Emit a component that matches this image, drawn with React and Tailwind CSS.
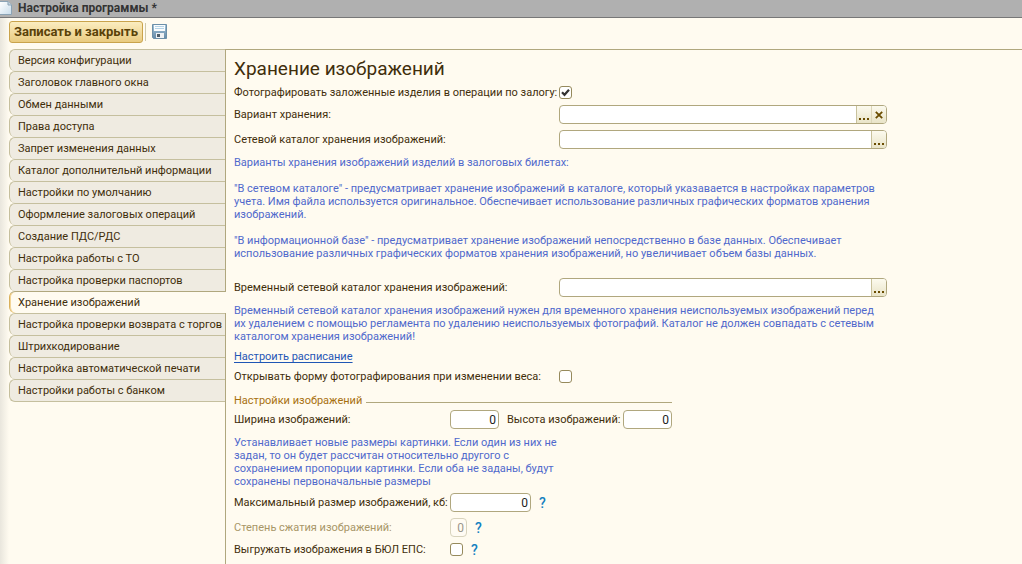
import React from "react";

const sections = [
  "Версия конфигурации",
  "Заголовок главного окна",
  "Обмен данными",
  "Права доступа",
  "Запрет изменения данных",
  "Каталог дополнительнй информации",
  "Настройки по умолчанию",
  "Оформление залоговых операций",
  "Создание ПДС/РДС",
  "Настройка работы с ТО",
  "Настройка проверки паспортов",
  "Хранение изображений",
  "Настройка проверки возврата с торгов",
  "Штрихкодирование",
  "Настройка автоматической печати",
  "Настройки работы с банком",
];
const active = "Хранение изображений";

const storageHint = `Варианты хранения изображений изделий в залоговых билетах:

"В сетевом каталоге" - предусматривает хранение изображений в каталоге, который указавается в настройках параметров
учета. Имя файла используется оригинальное. Обеспечивает использование различных графических форматов хранения
изображений.

"В информационной базе" - предусматривает хранение изображений непосредственно в базе данных. Обеспечивает
использование различных графических форматов хранения изображений, но увеличивает объем базы данных.`;

const tempHint = `Временный сетевой каталог хранения изображений нужен для временного хранения неиспользуемых изображений перед
их удалением с помощью регламента по удалению неиспользуемых фотографий. Каталог не должен совпадать с сетевым
каталогом хранения изображений!`;

const sizeHint = `Устанавливает новые размеры картинки. Если один из них не
задан, то он будет рассчитан относительно другого с
сохранением пропорции картинки. Если оба не заданы, будут
сохранены первоначальные размеры`;

function PageIcon() {
  return (
    <svg width="12" height="14" viewBox="0 0 12 14" className="shrink-0" aria-hidden="true">
      <defs>
        <linearGradient id="sheet" x1="0" y1="0" x2="1" y2="1">
          <stop offset="0" stopColor="#ffffff" />
          <stop offset="1" stopColor="#c8dcea" />
        </linearGradient>
      </defs>
      <path d="M0 0.5H8L11.5 4V13.5H0" fill="url(#sheet)" stroke="#8ba3b5" />
      <path d="M8 0.5V4H11.5" fill="#c3d5e2" stroke="#8ba3b5" />
    </svg>
  );
}

function DiskIcon() {
  return (
    <svg width="15" height="15" viewBox="0 0 15 15" aria-hidden="true">
      <defs>
        <linearGradient id="disk" x1="0" y1="0" x2="0" y2="1">
          <stop offset="0" stopColor="#a3c4da" />
          <stop offset="1" stopColor="#668aa6" />
        </linearGradient>
      </defs>
      <path d="M0.5 0.5H14.5V14.5H1.5L0.5 13.5Z" fill="url(#disk)" stroke="#6c8fa8" />
      <rect x="2" y="1" width="11" height="6" fill="#fafcfd" />
      <rect x="3" y="2" width="9" height="1" fill="#b4d3e6" />
      <rect x="3" y="4" width="9" height="1" fill="#b4d3e6" />
      <rect x="4" y="9" width="8" height="5" fill="#eef1f3" />
      <rect x="5" y="10" width="6" height="3" fill="#4f5d69" />
      <rect x="8" y="10" width="3" height="4" fill="#eef1f3" />
    </svg>
  );
}

function Dots() {
  return (
    <svg width="10" height="2" viewBox="0 0 10 2" aria-hidden="true">
      <path d="M0 0h2v2H0zM4 0h2v2H4zM8 0h2v2H8z" fill="#6a4c00" />
    </svg>
  );
}

function Cross() {
  return (
    <svg width="8" height="8" viewBox="0 0 8 8" aria-hidden="true">
      <path d="M0.8 0.8L7.2 7.2M7.2 0.8L0.8 7.2" stroke="#6a4c00" strokeWidth="1.8" />
    </svg>
  );
}

function PickerRow({ id, label, clearable, className }) {
  return (
    <div className={"flex items-center " + className}>
      <label htmlFor={id} className="w-[325px] shrink-0">{label}</label>
      <div className="flex h-[19px] w-[328px] overflow-hidden rounded border border-[#b0a77e] bg-white">
        <input id={id} type="text" className="min-w-0 flex-1 px-1 outline-none" />
        <button type="button" aria-label="Выбрать" className="flex w-[15px] items-end justify-center border-l border-[#c9c29c] bg-linear-to-b from-[#fcfaee] to-[#e9e4c8] pb-[3px]">
          <Dots />
        </button>
        {clearable && (
          <button type="button" aria-label="Очистить" className="flex w-[15px] items-center justify-center border-l border-[#dcd6b8] bg-linear-to-b from-[#fcfaee] to-[#e9e4c8]">
            <Cross />
          </button>
        )}
      </div>
    </div>
  );
}

function Check({ id, defaultChecked }) {
  return (
    <span className="relative flex">
      <input id={id} type="checkbox" defaultChecked={defaultChecked} className="peer size-[13px] appearance-none rounded-[3px] border border-[#968a5c] bg-white" />
      <svg width="13" height="13" viewBox="0 0 13 13" className="pointer-events-none absolute inset-0 hidden peer-checked:block" aria-hidden="true">
        <path d="M3 6.2L5.5 8.8L10 3.8" fill="none" stroke="#333333" strokeWidth="2.2" />
      </svg>
    </span>
  );
}

function NumberBox({ id, className, disabled }) {
  return (
    <input
      id={id}
      type="text"
      inputMode="numeric"
      defaultValue="0"
      disabled={disabled}
      className={"h-[19px] rounded border px-0.5 text-right text-xs " + (disabled ? "border-[#d8d3bd] bg-[#fffbf3] text-[#9a958a] " : "border-[#b0a77e] bg-white text-[#222222] ") + className}
    />
  );
}

function Help() {
  return <button type="button" aria-label="Справка" className="px-2 text-sm leading-4 font-medium text-[#1480c0]">?</button>;
}

function Hint({ children, className }) {
  return <p className={"leading-[13px] whitespace-pre-line text-[#5069cc] " + className}>{children}</p>;
}

export default function App() {
  return (
    <div className="flex min-h-screen flex-col overflow-x-hidden bg-[#fffbf0] font-['Roboto',sans-serif] text-[11px] leading-[19px] text-[#3f2e0b]">
      <header className="flex h-[18px] items-center gap-1.5 border-b border-[#777777] bg-[#b0b0b0] pb-0.5">
        <PageIcon />
        <h1 className="text-xs leading-4 font-bold text-[#333333]">Настройка программы *</h1>
      </header>
      <div className="flex flex-1 flex-col bg-[linear-gradient(to_right,#e9e6dd,#fffbf0_9px)]">
        <div className="flex h-[31px] items-center gap-0.5 pb-1 pl-[9px]">
          <button type="button" className="h-[22px] min-w-[133px] rounded-[3px] border border-[#c9a34c] bg-linear-to-b from-[#fbedc0] to-[#e9cb80] px-1 text-[13px] leading-5 font-bold text-[#5a4208]">
            Записать и закрыть
          </button>
          <span className="h-[18px] w-px bg-[#cfc9aa]" />
          <button type="button" aria-label="Записать" className="ml-1 flex">
            <DiskIcon />
          </button>
        </div>
        <div className="flex flex-1">
          <nav className="flex w-[226px] shrink-0 flex-col pl-[9px]">
            <ul>
              {sections.map((name) => (
                <li key={name} className={"group flex " + (name === active ? "" : "border-r border-[#b0a77e]")}>
                  <button
                    type="button"
                    aria-current={name === active ? "page" : undefined}
                    className={
                      "h-[22px] w-full rounded-l-md border-t border-l pl-2 text-left whitespace-nowrap group-last:h-[23px] group-last:border-b " +
                      (name === active
                        ? "border-t-[#b0a77e] border-l-[#d9b05c] bg-[#fffbf0] shadow-[inset_1px_0_0_#f3d596]"
                        : "border-[#c5bf9e] bg-[#efebe1]")
                    }
                  >
                    {name}
                  </button>
                </li>
              ))}
            </ul>
            <div className="flex-1 border-r border-[#b0a77e]" />
          </nav>
          <main className="flex min-w-0 flex-1 flex-col border-t border-[#b0a77e] pt-[7px] pl-2">
            <h2 className="text-[19px] leading-6">Хранение изображений</h2>
            <div className="mt-0.5 flex items-center">
              <label htmlFor="photo" className="w-[325px] shrink-0 whitespace-nowrap">Фотографировать заложенные изделия в операции по залогу:</label>
              <Check id="photo" defaultChecked />
            </div>
            <PickerRow id="variant" label="Вариант хранения:" clearable className="mt-[3px]" />
            <PickerRow id="catalog" label="Сетевой каталог хранения изображений:" className="mt-1.5" />
            <Hint className="mt-[7px]">{storageHint}</Hint>
            <PickerRow id="temp" label="Временный сетевой каталог хранения изображений:" className="mt-[18px]" />
            <Hint className="mt-[7px]">{tempHint}</Hint>
            <div className="mt-1">
              <a href="#schedule" className="text-[#1f56b5] underline underline-offset-2">Настроить расписание</a>
            </div>
            <div className="mt-px flex items-center">
              <label htmlFor="weight" className="w-[325px] shrink-0">Открывать форму фотографирования при изменении веса:</label>
              <Check id="weight" />
            </div>
            <fieldset className="mt-[5px] w-[438px]">
              <div className="flex items-center gap-1">
                <span className="text-[#a8700f]">Настройки изображений</span>
                <span className="mt-1 h-px flex-1 bg-[#b0a77e]" />
              </div>
              <div className="flex items-center">
                <label htmlFor="width" className="w-[216px]">Ширина изображений:</label>
                <NumberBox id="width" className="w-[49px]" />
                <label htmlFor="height" className="w-[124px] pl-2 whitespace-nowrap">Высота изображений:</label>
                <NumberBox id="height" className="w-[49px]" />
              </div>
            </fieldset>
            <Hint className="mt-[7px]">{sizeHint}</Hint>
            <div className="mt-[5px] flex items-center">
              <label htmlFor="max" className="w-[216px] shrink-0 whitespace-nowrap">Максимальный размер изображений, кб:</label>
              <NumberBox id="max" className="w-[81px]" />
              <Help />
            </div>
            <div className="mt-1.5 flex items-center">
              <label htmlFor="ratio" className="w-[216px] shrink-0 text-[#a89667]">Степень сжатия изображений:</label>
              <NumberBox id="ratio" className="w-[17px]" disabled />
              <Help />
            </div>
            <div className="mt-[3px] flex items-center">
              <label htmlFor="export" className="w-[216px] shrink-0">Выгружать изображения в БЮЛ ЕПС:</label>
              <Check id="export" />
              <Help />
            </div>
          </main>
        </div>
      </div>
    </div>
  );
}
